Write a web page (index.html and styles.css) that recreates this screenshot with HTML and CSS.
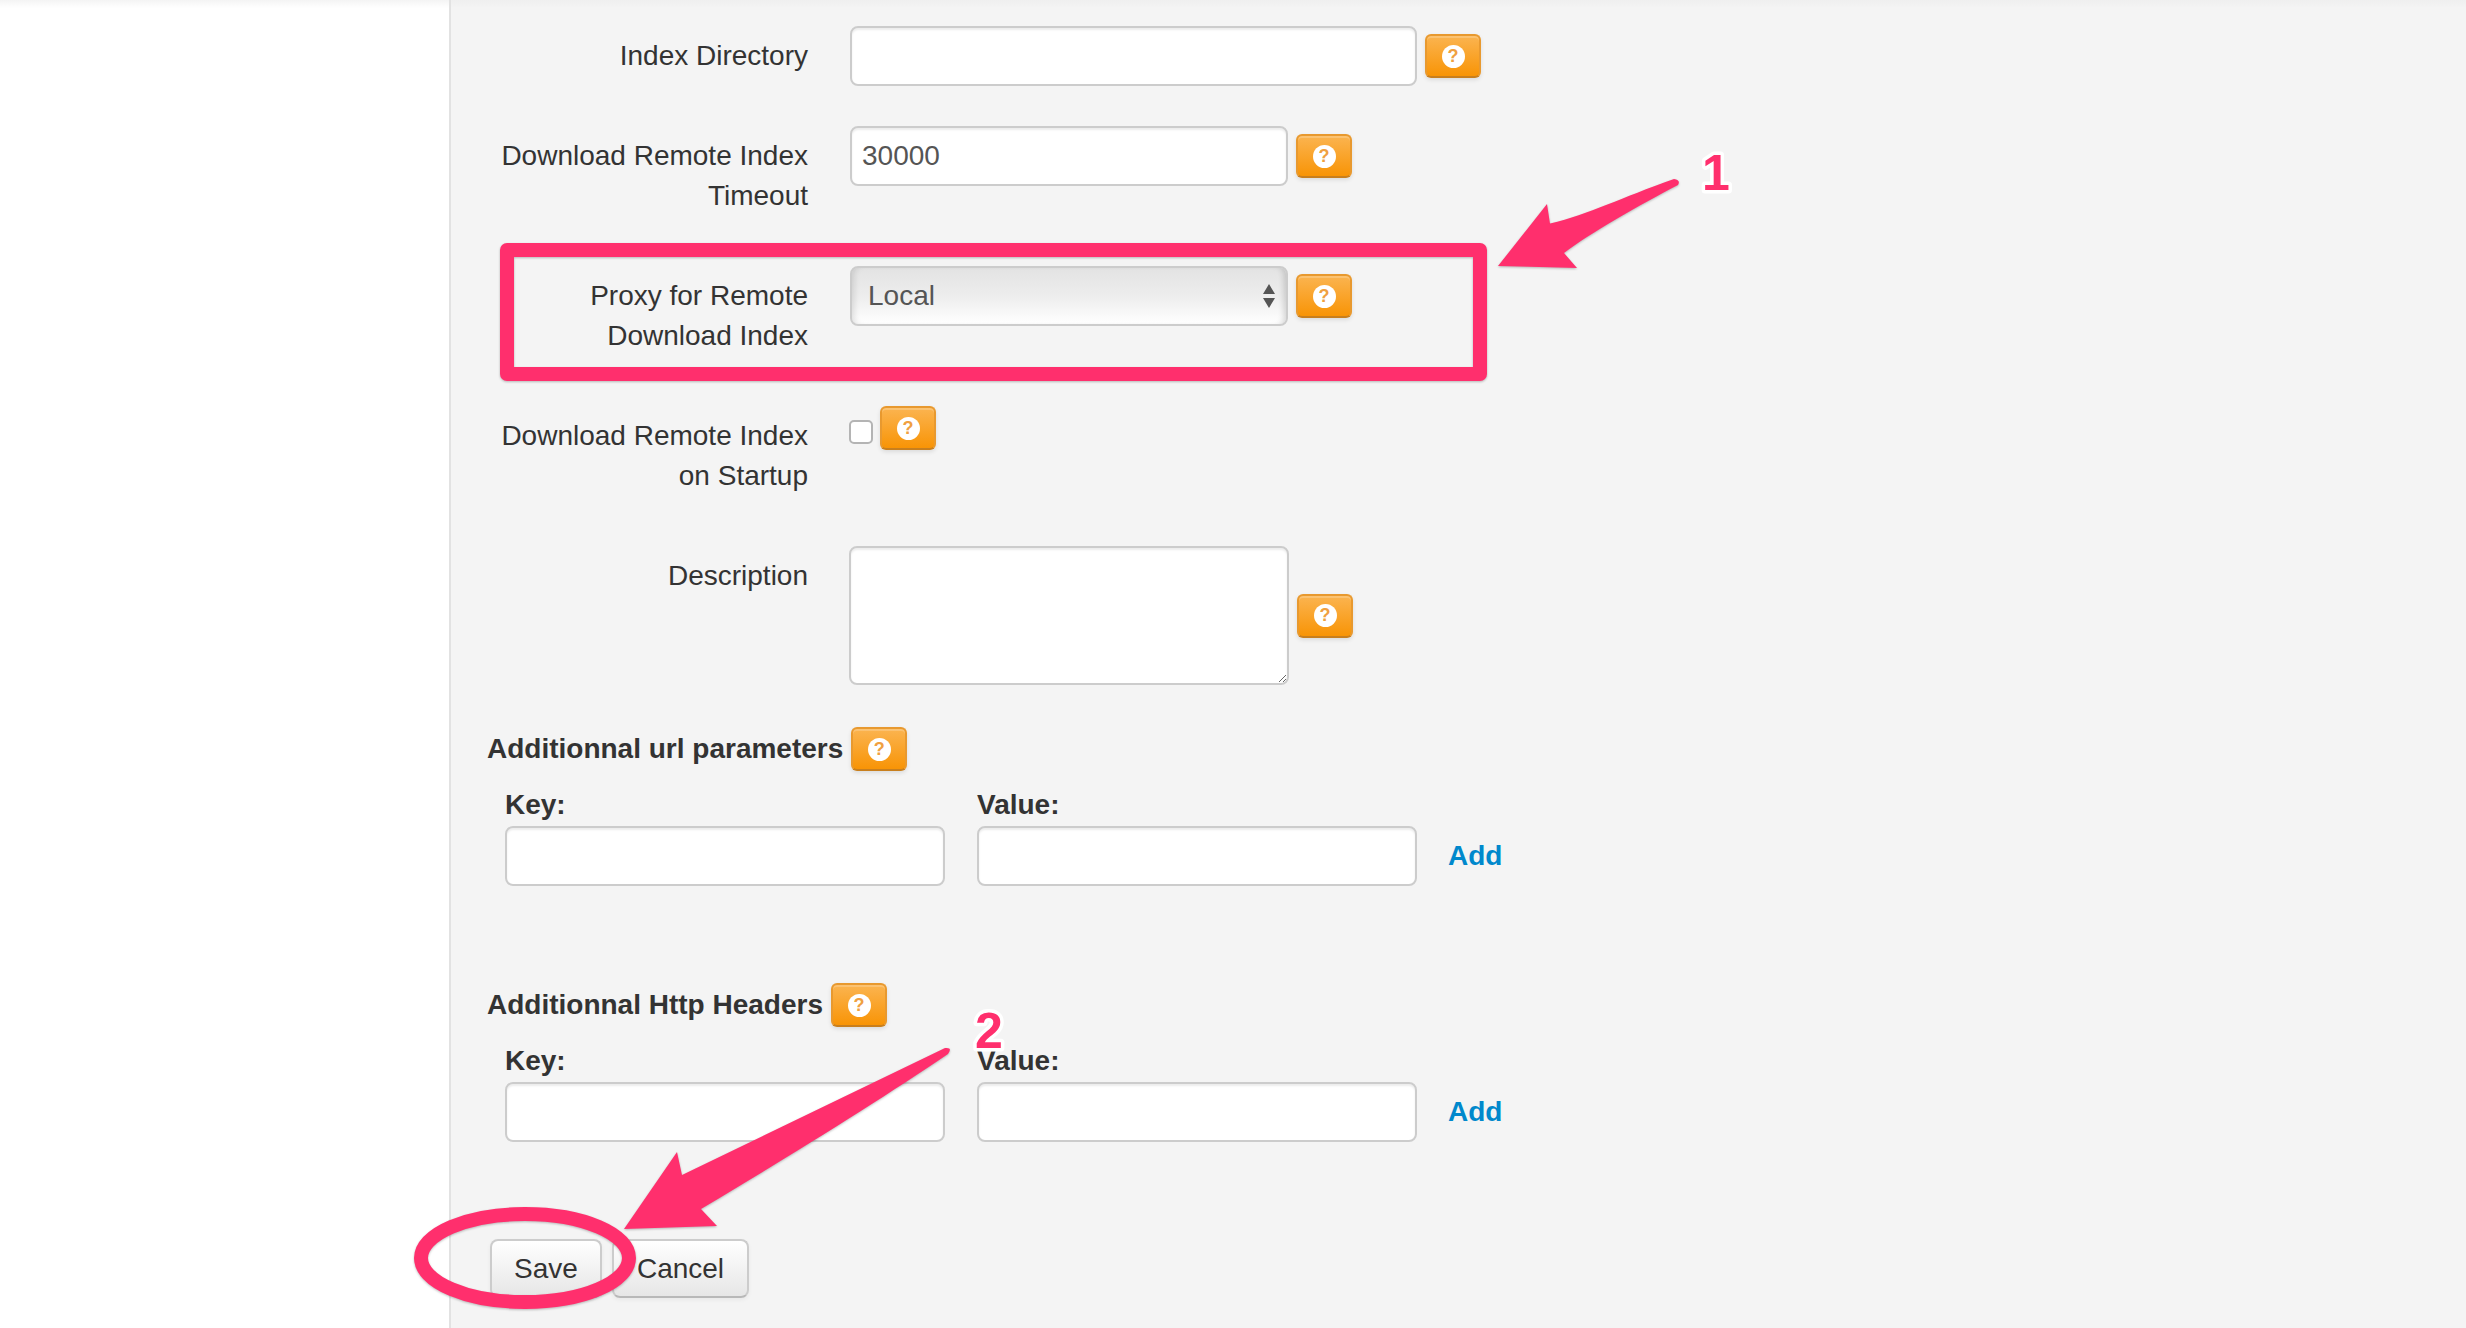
FILE: index.html
```html
<!DOCTYPE html>
<html lang="en">
<head>
    <meta charset="UTF-8">
    <meta name="viewport" content="width=device-width, initial-scale=1.0">
    <title>Edit Repository</title>
    <link rel="stylesheet" href="styles.css">
</head>
<body>
    <div class="page">
        <div class="sidebar"></div>

        <div class="content">
            <form class="repo-form">
                <div class="control-group">
                    <label class="control-label">Index Directory</label>
                    <div class="controls">
                        <input class="field field-wide" type="text">
                        <button class="help-btn" type="button"><span class="help-icon">?</span></button>
                    </div>
                </div>

                <div class="control-group">
                    <label class="control-label">Download Remote Index Timeout</label>
                    <div class="controls">
                        <input class="field field-medium" type="text" value="30000">
                        <button class="help-btn" type="button"><span class="help-icon">?</span></button>
                    </div>
                </div>

                <div class="control-group">
                    <label class="control-label">Proxy for Remote Download Index</label>
                    <div class="controls">
                        <div class="select-wrap">
                            <select class="field-select">
                                <option>Local</option>
                            </select>
                            <svg class="select-arrows" width="14" height="26" viewBox="0 0 14 26">
                                <path d="M7 1 L13 11 L1 11 Z M1 15 L13 15 L7 25 Z" fill="#555"/>
                            </svg>
                        </div>
                        <button class="help-btn" type="button"><span class="help-icon">?</span></button>
                    </div>
                </div>

                <div class="control-group">
                    <label class="control-label">Download Remote Index on Startup</label>
                    <div class="controls controls-check">
                        <input class="check" type="checkbox">
                        <button class="help-btn" type="button"><span class="help-icon">?</span></button>
                    </div>
                </div>

                <div class="control-group group-description">
                    <label class="control-label">Description</label>
                    <div class="controls controls-area">
                        <textarea class="area"></textarea>
                        <button class="help-btn" type="button"><span class="help-icon">?</span></button>
                    </div>
                </div>

                <div class="section-head">
                    <h4>Additionnal url parameters</h4>
                    <button class="help-btn" type="button"><span class="help-icon">?</span></button>
                </div>
                <div class="param-row">
                    <div class="param-col">
                        <label>Key:</label>
                        <input class="field" type="text">
                    </div>
                    <div class="param-col">
                        <label>Value:</label>
                        <input class="field" type="text">
                    </div>
                    <a class="add-link" href="#">Add</a>
                </div>

                <div class="section-head section-second">
                    <h4>Additionnal Http Headers</h4>
                    <button class="help-btn" type="button"><span class="help-icon">?</span></button>
                </div>
                <div class="param-row">
                    <div class="param-col">
                        <label>Key:</label>
                        <input class="field" type="text">
                    </div>
                    <div class="param-col">
                        <label>Value:</label>
                        <input class="field" type="text">
                    </div>
                    <a class="add-link" href="#">Add</a>
                </div>

                <div class="form-actions">
                    <button class="btn btn-save" type="button">Save</button>
                    <button class="btn btn-cancel" type="button">Cancel</button>
                </div>
            </form>
        </div>
    </div>

    <!-- annotations drawn on top of the screenshot -->
    <svg class="annotations" width="2466" height="1328" viewBox="0 0 2466 1328">
        <g class="mark">
            <rect x="507" y="250" width="973" height="124" fill="none" stroke="#ff2f6d" stroke-width="14" stroke-linejoin="round"/>
            <path d="M1674 179 C1620 198 1590 214 1550 223.5 L1547 204 L1498 266 L1577 268 L1564 253 C1590 233 1640 205 1678 185 Q1681 180 1674 179 Z" fill="#ff2f6d"/>
            <path d="M945 1048 L682 1175 L677 1152 L624 1229 L717 1226 L701 1209 C800 1150 880 1100 948 1054 Q953 1047 945 1048 Z" fill="#ff2f6d"/>
            <ellipse cx="525" cy="1258" rx="104" ry="44" fill="none" stroke="#ff2f6d" stroke-width="14"/>
        </g>
        <text class="mark-num" x="1716" y="190" text-anchor="middle">1</text>
        <text class="mark-num" x="989" y="1048" text-anchor="middle">2</text>
    </svg>
</body>
</html>
```

FILE: styles.css
```css
* {
    margin: 0;
    padding: 0;
    box-sizing: border-box;
}

body {
    font-family: 'Liberation Sans', Arial, sans-serif;
    font-size: 28px;
    line-height: 40px;
    color: #333;
    background: #fff;
    overflow: hidden;
}

.page {
    display: flex;
    width: 2466px;
    height: 1328px;
    position: relative;
}

.sidebar {
    width: 449px;
    flex-shrink: 0;
    background: linear-gradient(#f4f4f4, #fff 8px);
}

.content {
    flex: 1;
    background: linear-gradient(#efefef, #f4f4f4 8px);
    border-left: 2px solid #e2e2e2;
    padding: 26px 0 0 36px;
}

.repo-form {
    width: 1000px;
}

/* horizontal form rows */
.control-group {
    display: flex;
    margin-bottom: 40px;
    min-height: 60px;
}

.control-label {
    width: 321px;
    flex-shrink: 0;
    padding-top: 10px;
    padding-bottom: 10px;
    text-align: right;
}

.controls {
    margin-left: 42px;
    display: flex;
    align-items: flex-start;
    gap: 8px;
}

.controls-check {
    margin-left: 41px;
    gap: 7px;
    margin-top: 0;
}

.controls-area {
    align-items: center;
    margin-left: 41px;
}

.group-description {
    margin-bottom: 42px;
    height: 139px;
}

.field {
    height: 60px;
    border: 2px solid #ccc;
    border-radius: 8px;
    background: #fff;
    box-shadow: inset 0 2px 2px rgba(0,0,0,0.075);
    font: inherit;
    color: #555;
    padding: 8px 10px;
    display: block;
    width: 440px;
}

.field-wide {
    width: 567px;
}

.field-medium {
    width: 438px;
}

.select-wrap {
    position: relative;
    width: 438px;
    height: 60px;
}

.field-select {
    appearance: none;
    width: 100%;
    height: 100%;
    border: 2px solid #ccc;
    border-radius: 8px;
    background: linear-gradient(#e3e3e3, #ededed 50%, #fff);
    box-shadow: inset 6px 0 6px -4px rgba(0,0,0,0.12), inset -6px 0 6px -4px rgba(0,0,0,0.16);
    font: inherit;
    color: #555;
    padding: 0 16px;
}

.select-arrows {
    position: absolute;
    right: 12px;
    top: 17px;
    pointer-events: none;
}

.check {
    appearance: none;
    width: 24px;
    height: 24px;
    margin-top: 14px;
    border: 2px solid #b4b4b4;
    border-radius: 5px;
    background: #fff;
}

.area {
    display: block;
    width: 440px;
    height: 139px;
    border: 2px solid #ccc;
    border-radius: 8px;
    background: #fff;
    box-shadow: inset 0 2px 2px rgba(0,0,0,0.075);
    resize: both;
}

.help-btn {
    width: 56px;
    height: 44px;
    margin-top: 8px;
    flex-shrink: 0;
    display: flex;
    align-items: center;
    justify-content: center;
    background: linear-gradient(#fbb450, #f89406);
    border: 2px solid #e8992f;
    border-bottom-color: #c87f1e;
    border-radius: 6px;
    box-shadow: inset 0 2px 0 rgba(255,255,255,0.2), 0 2px 4px rgba(0,0,0,0.1);
}

.controls-check .help-btn,
.controls-area .help-btn,
.section-head .help-btn {
    margin-top: 0;
}

.help-icon {
    width: 23px;
    height: 23px;
    border-radius: 50%;
    background: #fff;
    color: #f0a040;
    font-size: 18px;
    line-height: 23px;
    font-weight: bold;
    text-align: center;
}

/* key / value blocks */
.section-head {
    display: flex;
    align-items: center;
    gap: 8px;
    height: 44px;
}

.section-head h4 {
    font-size: 28px;
    line-height: 40px;
    font-weight: bold;
}

.section-second {
    margin-top: 97px;
}

.param-row {
    display: flex;
    align-items: flex-end;
    gap: 32px;
    margin-top: 14px;
    padding-left: 18px;
}

.param-col label {
    display: block;
    font-weight: bold;
    margin-bottom: 1px;
}

.add-link {
    margin-left: -1px;
    height: 50px;
    font-weight: bold;
    color: #0088cc;
    text-decoration: none;
}

.form-actions {
    display: flex;
    gap: 10px;
    margin-top: 97px;
    padding-left: 3px;
}

.btn {
    height: 59px;
    border: 2px solid #ccc;
    border-bottom-color: #b8b8b8;
    border-radius: 8px;
    background: linear-gradient(#fff, #e6e6e6);
    box-shadow: inset 0 2px 0 rgba(255,255,255,0.2), 0 2px 4px rgba(0,0,0,0.05);
    font: inherit;
    color: #333;
}

.btn-save {
    width: 112px;
}

.btn-cancel {
    width: 137px;
}

.annotations {
    position: absolute;
    left: 0;
    top: 0;
    pointer-events: none;
}

.mark {
    filter: drop-shadow(0 1px 1px rgba(0,0,0,0.25));
}

.mark-num {
    font-family: 'Liberation Sans', Arial, sans-serif;
    font-size: 50px;
    font-weight: bold;
    fill: #ff2f6d;
    stroke: #fff;
    stroke-width: 7px;
    stroke-linejoin: round;
    paint-order: stroke;
}
```
